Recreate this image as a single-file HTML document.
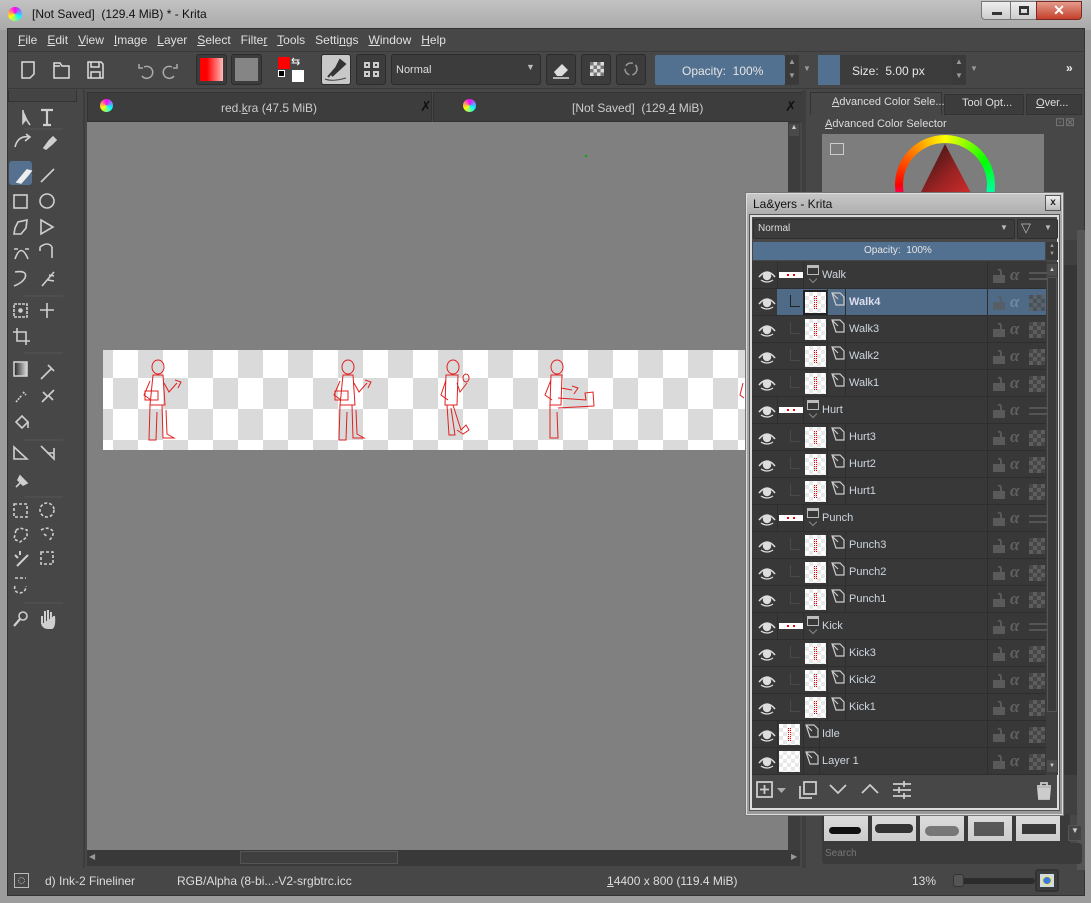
<!DOCTYPE html>
<html><head><meta charset="utf-8">
<style>
*{margin:0;padding:0;box-sizing:border-box}
body{width:1091px;height:903px;overflow:hidden;background:#9c9c9c;font-family:"Liberation Sans",sans-serif;font-size:12px;position:relative}
.a{position:absolute}
.t{position:absolute;white-space:nowrap;color:#d6d6d6}
.btn{position:absolute;background:#3c3c3c;border:1px solid #2c2c2c;border-radius:3px}
.r{position:absolute;left:752px;width:294px;height:27px;border-bottom:1px solid #2e2e2e;background:#383838}
.r.sel{background:#4f6a87}
.r .n{position:absolute;top:7px;color:#cfd6df;font-size:11px}
.r .eye{position:absolute;left:6px;top:6px}
.r .sep{position:absolute;top:0;width:1px;height:27px;background:#2e2e2e}
.r .lk{position:absolute;left:240px;top:6px}
.r .al{position:absolute;left:258px;top:3px;color:#606060;font:italic bold 17px "Liberation Serif",serif}
.r .ck{position:absolute;left:277px;top:6px;width:16px;height:16px;background:conic-gradient(#5e5e5e 25%,#464646 0 50%,#5e5e5e 0 75%,#464646 0);background-size:8px 8px}
.r .gl{position:absolute;left:277px;top:10px;width:18px;height:8px;border-top:2px solid #555;border-bottom:2px solid #555}
.r .th{position:absolute;top:3px;width:21px;height:21px;background:#fff conic-gradient(#e8e8e8 25%,#fff 0 50%,#e8e8e8 0 75%,#fff 0);background-size:8px 8px}
.r .th i{position:absolute;left:9px;top:4px;width:3px;height:13px;border-left:1px dotted #e00;border-right:1px dotted #e00}
.r .gs{position:absolute;left:27px;top:10px;width:24px;height:6px;background:#fff}
.r .gs i{position:absolute;left:8px;top:2px;width:8px;height:2px;border-left:2px solid #e00;border-right:2px solid #e00}
.r .fd{position:absolute;left:55px;top:3px;width:12px;height:10px;border:1px solid #bbb;border-top-width:3px}
.r .cv{position:absolute;left:58px;top:14px;width:6px;height:6px;border-right:1px solid #888;border-bottom:1px solid #888;transform:rotate(45deg)}
.r .ic{position:absolute;top:3px}
.r .ln{position:absolute;left:38px;top:6px;width:10px;height:12px;border-left:1px solid #4a4a4a;border-bottom:1px solid #4a4a4a}
.tool{position:absolute}
</style></head><body>
<svg width="0" height="0" style="position:absolute">
<defs>
<symbol id="eye" viewBox="0 0 18 16"><path d="M1 9 Q9 -1 17 9" fill="none" stroke="#ddd" stroke-width="1.6"/><circle cx="9" cy="8" r="4.2" fill="#ddd"/><path d="M3 12 Q9 16 15 12" fill="none" stroke="#ddd" stroke-width="1.3"/></symbol>
<symbol id="lock" viewBox="0 0 14 16"><rect x="1" y="7" width="12" height="8" fill="#5a5a5a"/><path d="M9 7 V4 Q9 1 6 2" fill="none" stroke="#5a5a5a" stroke-width="2"/></symbol>
<symbol id="pl" viewBox="0 0 14 14"><path d="M1 1 H9 L13 5 V13 H5 Z M1 1 L7 7" fill="none" stroke="#ccc" stroke-width="1.2"/></symbol>
</defs></svg>

<!-- title bar -->
<div class="a" style="left:0;top:0;width:1091px;height:30px;background:linear-gradient(#c2c2c2,#a9a9a9)"></div>
<div class="a" style="left:8px;top:7px;width:14px;height:14px;border-radius:50%;background:conic-gradient(#f0f,#0ff,#ff0,#f0f)"></div>
<div class="t" style="left:32px;top:7px;color:#111;font-size:12px">[Not Saved]&nbsp; (129.4 MiB) * - Krita</div>
<div class="a" style="left:981px;top:1px;width:30px;height:19px;background:linear-gradient(#eee,#ccc);border:1px solid #777;border-radius:0 0 0 4px"><div class="a" style="left:10px;top:10px;width:10px;height:3px;background:#333"></div></div>
<div class="a" style="left:1010px;top:1px;width:27px;height:19px;background:linear-gradient(#eee,#ccc);border:1px solid #777"><div class="a" style="left:8px;top:4px;width:10px;height:9px;border:2px solid #333;border-top-width:3px"></div></div>
<div class="a" style="left:1036px;top:1px;width:46px;height:19px;background:linear-gradient(#e59c8c,#c4402c);border:1px solid #7a2a22;border-radius:0 0 4px 0;color:#fff;font:bold 14px 'Liberation Sans';text-align:center;line-height:17px">✕</div>

<!-- main area -->
<div class="a" style="left:7px;top:28px;width:1078px;height:868px;background:#474747;border:1px solid #333"></div>
<!-- menu -->
<div class="t" style="left:18px;top:33px;font-size:12px;color:#e0e0e0;word-spacing:0"><u>F</u>ile&nbsp;&nbsp; <u>E</u>dit&nbsp;&nbsp; <u>V</u>iew&nbsp;&nbsp; <u>I</u>mage&nbsp;&nbsp; <u>L</u>ayer&nbsp;&nbsp; <u>S</u>elect&nbsp;&nbsp; Filte<u>r</u>&nbsp;&nbsp; <u>T</u>ools&nbsp;&nbsp; Setti<u>n</u>gs&nbsp;&nbsp; <u>W</u>indow&nbsp;&nbsp; <u>H</u>elp</div>
<div class="a" style="left:8px;top:51px;width:1077px;height:1px;background:#3a3a3a"></div>
<!-- toolbar -->
<svg class="a" style="left:14px;top:56px" width="300" height="30">
<g fill="none" stroke="#ddd" stroke-width="1.5">
<path d="M8 6 H20 V18 L16 22 H8 Z"/>
<path d="M40 7 H46 L48 10 H55 V22 H40 Z M40 10 H46"/>
<path d="M74 6 H87 L89 8 V22 H74 Z M77 6 V11 H85 V6 M77 22 V16 H86 V22"/>
<path d="M130 11 A6 6 0 1 1 128 20 M125 8 V12 H129" stroke="#aaa"/>
<path d="M158 11 A6 6 0 1 0 160 20 M163 8 V12 H159" stroke="#aaa"/>
</g></svg>
<div class="btn" style="left:196px;top:54px;width:31px;height:31px;padding:3px"><div style="width:100%;height:100%;background:linear-gradient(90deg,#f00 30%,#fbb)"></div></div>
<div class="btn" style="left:231px;top:54px;width:31px;height:31px;padding:3px"><div style="width:100%;height:100%;background:#858585"></div></div>
<div class="a" style="left:278px;top:57px;width:12px;height:12px;background:#f00"></div>
<div class="a" style="left:278px;top:70px;width:7px;height:7px;background:#000;border:1px solid #fff"></div>
<div class="a" style="left:292px;top:70px;width:12px;height:12px;background:#fff"></div>
<div class="t" style="left:291px;top:55px;font-size:11px;color:#fff">⇆</div>
<div class="btn" style="left:321px;top:54px;width:30px;height:31px;background:#c8c8c8"><svg width="28" height="29"><path d="M6 22 L20 6 M18 5 L23 9 L10 21 Z" stroke="#333" stroke-width="2" fill="#333"/><path d="M3 24 Q10 27 24 23" stroke="#444" fill="none"/></svg></div>
<div class="btn" style="left:356px;top:54px;width:30px;height:31px"><div class="a" style="left:7px;top:7px;width:6px;height:6px;border:2px solid #ccc"></div><div class="a" style="left:16px;top:7px;width:6px;height:6px;border:2px solid #ccc"></div><div class="a" style="left:7px;top:16px;width:6px;height:6px;border:2px solid #ccc"></div><div class="a" style="left:16px;top:16px;width:6px;height:6px;border:2px solid #ccc"></div></div>
<div class="btn" style="left:391px;top:54px;width:150px;height:31px"><span class="t" style="left:4px;top:9px;font-size:11px;color:#ddd">Normal</span><span class="t" style="left:134px;top:7px;font-size:9px;color:#bbb">▼</span></div>
<div class="btn" style="left:546px;top:54px;width:30px;height:31px"><svg width="28" height="29"><path d="M7 17 L15 9 L21 15 L15 21 H10 Z" fill="#ddd"/><path d="M6 23 H22" stroke="#ddd" stroke-width="1.5"/></svg></div>
<div class="btn" style="left:581px;top:54px;width:30px;height:31px;padding:7px 8px"><div style="width:14px;height:14px;background:conic-gradient(#ddd 25%,#777 0 50%,#ddd 0 75%,#777 0);background-size:7px 7px"></div></div>
<div class="btn" style="left:616px;top:54px;width:30px;height:31px"><svg width="28" height="29"><circle cx="14" cy="14" r="6" fill="none" stroke="#999" stroke-width="1.5" stroke-dasharray="8 3"/></svg></div>
<div class="a" style="left:655px;top:55px;width:130px;height:30px;background:#52708f;border-radius:2px"></div>
<div class="t" style="left:682px;top:64px;font-size:12px;color:#e6e6e6">Opacity:&nbsp; 100%</div>
<div class="a" style="left:785px;top:55px;width:14px;height:30px;background:#3a3a3a"><span class="t" style="left:3px;top:2px;font-size:8px;color:#999">▲</span><span class="t" style="left:3px;top:16px;font-size:8px;color:#999">▼</span></div>
<span class="t" style="left:803px;top:64px;font-size:8px;color:#999">▼</span>
<div class="a" style="left:818px;top:55px;width:22px;height:30px;background:#52708f"></div>
<div class="a" style="left:840px;top:55px;width:112px;height:30px;background:#3c3c3c"></div>
<div class="t" style="left:852px;top:64px;font-size:12px;color:#e6e6e6">Size:&nbsp; 5.00 px</div>
<div class="a" style="left:952px;top:55px;width:14px;height:30px;background:#3a3a3a"><span class="t" style="left:3px;top:2px;font-size:8px;color:#999">▲</span><span class="t" style="left:3px;top:16px;font-size:8px;color:#999">▼</span></div>
<span class="t" style="left:970px;top:64px;font-size:8px;color:#999">▼</span>
<span class="t" style="left:1066px;top:61px;font-size:12px;color:#eee;font-weight:bold">»</span>
<div class="a" style="left:8px;top:88px;width:1077px;height:1px;background:#3a3a3a"></div>

<!-- toolbox -->
<div class="a" style="left:8px;top:90px;width:69px;height:12px;border:1px solid #333;border-top:0;background:#444"></div>
<div class="a" style="left:83px;top:90px;width:2px;height:778px;background:#3d3d3d"></div>
<div class="a" style="left:9px;top:161px;width:23px;height:24px;background:#55718f;border-radius:3px"></div>
<svg class="a" style="left:8px;top:100px" width="72" height="530">
<g fill="none" stroke="#cfcfcf" stroke-width="1.6">
<path d="M15 10 L15 23 L18 19 L22 25" fill="#cfcfcf"/>
<path d="M33 10 H45 M39 10 V25 M35 25 H43" stroke-width="2.2"/>
<path d="M7 47 Q10 35 22 37 M18 34 L22 37 L17 41"/>
<path d="M36 48 L41 41 L45 37 L48 40 L44 44 L38 49 Z" fill="#cfcfcf"/>
<path d="M16 29 H55" stroke="#555" stroke-width="1"/>
<path d="M9 82 L19 70 L23 71 L20 75 L13 83 Z" fill="#eee" stroke="#eee"/>
<path d="M33 82 L46 69"/>
<rect x="6" y="95" width="13" height="13"/>
<circle cx="39" cy="101" r="7"/>
<path d="M7 128 L10 122 L19 120 L18 128 L13 134 L6 134 Z"/>
<path d="M33 120 L45 127 L33 134 Z M33 120 L33 134"/>
<path d="M7 159 Q13 142 20 159 M6 149 H10 M17 149 H21"/>
<path d="M32 147 Q40 141 44 147 M44 147 V158 M32 147 V151"/>
<path d="M7 172 Q20 170 17 178 Q14 183 6 186"/>
<path d="M34 186 L46 172 M40 180 L46 181 M41 175 L46 176"/>
<path d="M16 196 H55" stroke="#555" stroke-width="1"/>
<rect x="6" y="204" width="13" height="13" stroke-dasharray="3 1"/>
<circle cx="12.5" cy="210.5" r="1.5" fill="#cfcfcf"/>
<path d="M39 203 V218 M32 210 H46"/>
<path d="M9 228 V241 H22 M5 232 H18 V245"/>
<path d="M16 253 H55" stroke="#555" stroke-width="1"/>
<rect x="6" y="262" width="13" height="14" fill="url(#gr)"/>
<path d="M33 279 L44 268 M40 265 L46 271"/>
<path d="M8 302 L14 295 M15 292 L18 295" stroke-dasharray="2 1"/>
<path d="M34 302 L46 290 M35 292 L39 296 M41 296 L45 300"/>
<path d="M8 322 L14 316 L20 322 L14 328 Z M20 322 V328"/>
<path d="M16 340 H55" stroke="#555" stroke-width="1"/>
<path d="M6 359 L6 347 L19 359 Z"/>
<path d="M33 346 L46 359 V348 M39 353 L46 353"/>
<path d="M8 387 L13 382 M12 376 L19 383 L15 385 L10 380 Z" fill="#cfcfcf"/>
<path d="M16 397 H55" stroke="#555" stroke-width="1"/>
<rect x="6" y="404" width="13" height="13" stroke-dasharray="3 2"/>
<circle cx="39" cy="410" r="7" stroke-dasharray="3 2"/>
<path d="M8 430 L12 428 L19 430 L19 437 L12 442 L6 439 Z" stroke-dasharray="3 2"/>
<path d="M33 430 Q40 426 45 431 Q46 437 40 441 M36 434 L40 437" stroke-dasharray="3 2"/>
<path d="M9 466 L20 455 M7 455 L10 458 M12 451 L12 455" stroke-width="2"/>
<rect x="33" y="452" width="12" height="12" stroke-dasharray="3 2"/>
<path d="M7 478 H18 M7 486 Q5 492 12 493 Q18 492 18 486" stroke-dasharray="3 2"/>
<path d="M16 503 H55" stroke="#555" stroke-width="1"/>
<circle cx="15" cy="516" r="4"/><path d="M12 519 L6 526" stroke-width="2.2"/>
<path d="M34 524 V516 M37 524 V511 M40 524 V510 M43 524 V512 M46 524 V516 M34 524 Q36 528 40 528 H44 Q47 526 46 516" fill="#cfcfcf" stroke-width="2"/>
</g>
<defs><linearGradient id="gr"><stop offset="0" stop-color="#222"/><stop offset="1" stop-color="#ddd"/></linearGradient></defs>
</svg>

<!-- document tabs -->
<div class="a" style="left:87px;top:92px;width:345px;height:30px;background:#3d3d3d;border:1px solid #333"></div>
<div class="a" style="left:100px;top:99px;width:13px;height:13px;border-radius:50%;background:conic-gradient(#f0f,#0ff,#ff0,#f0f)"></div>
<div class="t" style="left:221px;top:101px;font-size:12px;color:#ccc">red.<u>k</u>ra (47.5 MiB)</div>
<div class="t" style="left:420px;top:98px;font-size:14px;color:#111">✗</div>
<div class="a" style="left:433px;top:92px;width:370px;height:30px;background:#3d3d3d;border:1px solid #333"></div>
<div class="a" style="left:463px;top:99px;width:13px;height:13px;border-radius:50%;background:conic-gradient(#f0f,#0ff,#ff0,#f0f)"></div>
<div class="t" style="left:572px;top:101px;font-size:12px;color:#ccc">[Not Saved]&nbsp; (129.<u>4</u> MiB)</div>
<div class="t" style="left:785px;top:98px;font-size:14px;color:#111">✗</div>

<!-- canvas -->
<div class="a" style="left:87px;top:122px;width:701px;height:728px;background:#808080"></div>
<div class="a" style="left:585px;top:155px;width:2px;height:2px;background:#0a0"></div>
<div class="a" style="left:103px;top:350px;width:645px;height:100px;background:conic-gradient(#fff 25%,#dadada 0 50%,#fff 0 75%,#dadada 0);background-size:50px 62px;background-position:-15px -3px"></div>
<svg class="a" style="left:103px;top:350px" width="645" height="100">
<g fill="none" stroke="#e02020" stroke-width="1">
<g id="f1"><ellipse cx="55" cy="17" rx="6" ry="7"/><path d="M50 25 H60 L62 55 H47 Z M47 31 L41 45 L48 50 M61 33 L66 42 L74 33 M47 55 L46 90 H53 L54 62 M59 55 L60 88 H71 L64 84 L63 60"/><path d="M42 41 H55 V50 H42 Z M72 30 L78 32 L75 38"/></g>
<use href="#f1" x="190"/>
<g transform="translate(290,0)"><ellipse cx="60" cy="17" rx="6" ry="7"/><path d="M53 25 H65 L64 55 H52 Z M53 30 L48 45 L55 50 M64 33 L67 42 L74 33 M54 55 L56 85 L62 85 L58 58 M60 55 L68 80 L73 75 L76 80 L70 84 L64 80"/><ellipse cx="73" cy="28" rx="3" ry="4"/></g>
<g transform="translate(385,0)"><ellipse cx="69" cy="17" rx="6" ry="7"/><path d="M63 25 H74 L73 55 H62 Z M63 30 L57 45 L64 50 M73 38 L84 40 M84 36 L90 38 L86 44 M62 55 L62 88 H70 L69 62 M70 48 L98 50 L97 43 L105 42 L106 56 L70 58"/></g>
<path d="M640 33 L637 45 L641 48"/>
</g></svg>
<div class="a" style="left:788px;top:122px;width:12px;height:728px;background:#3d3d3d"><div class="a" style="left:1px;top:2px;width:10px;height:12px;background:#4a4a4a;color:#ccc;font-size:7px;text-align:center">▲</div></div>
<div class="a" style="left:87px;top:850px;width:713px;height:16px;background:#393939"><span class="t" style="left:2px;top:2px;font-size:8px;color:#999">◀</span><div class="a" style="left:153px;top:1px;width:158px;height:13px;border:1px solid #555;background:#3f3f3f"></div><span class="t" style="left:704px;top:2px;font-size:8px;color:#999">▶</span></div>
<!-- status bar -->
<div class="a" style="left:14px;top:873px;width:15px;height:15px;border:1px solid #bbb"><div class="a" style="left:3px;top:3px;width:7px;height:7px;border:1px dotted #bbb;border-radius:50%"></div></div>
<div class="t" style="left:45px;top:874px;font-size:12px;color:#ddd">d) Ink-2 Fineliner</div>
<div class="t" style="left:177px;top:874px;font-size:12px;color:#ddd">RGB/Alpha (8-bi...-V2-srgbtrc.icc</div>
<div class="t" style="left:607px;top:874px;font-size:12px;color:#ddd"><u>1</u>4400 x 800 (119.4 MiB)</div>
<div class="t" style="left:912px;top:874px;font-size:12px;color:#ddd">13%</div>
<div class="a" style="left:953px;top:878px;width:82px;height:6px;background:#2c2c2c;border-radius:3px"></div>
<div class="a" style="left:953px;top:874px;width:11px;height:13px;background:#555;border:1px solid #333;border-radius:3px"></div>
<div class="a" style="left:1035px;top:869px;width:24px;height:23px;border:2px solid #333;border-radius:3px;background:#3c3c3c;padding:3px"><div style="width:100%;height:100%;background:radial-gradient(#3a7ad9 35%,#f3e07a 40%,#cde 70%)"></div></div>

<!-- right dock -->
<div class="a" style="left:802px;top:90px;width:4px;height:778px;background:#3e3e3e"></div>
<div class="a" style="left:810px;top:92px;width:132px;height:23px;background:#474747;border:1px solid #333;border-bottom:0"></div>
<div class="t" style="left:832px;top:96px;font-size:11px;color:#ddd"><u>A</u>dvanced Color Sele...</div>
<div class="a" style="left:944px;top:94px;width:80px;height:21px;background:#3c3c3c;border:1px solid #333"></div>
<div class="t" style="left:962px;top:97px;font-size:11px;color:#ddd">Tool Opt...</div>
<div class="a" style="left:1026px;top:94px;width:56px;height:21px;background:#3c3c3c;border:1px solid #333"></div>
<div class="t" style="left:1036px;top:97px;font-size:11px;color:#ddd"><u>O</u>ver...</div>
<div class="t" style="left:825px;top:118px;font-size:11px;color:#ddd"><u>A</u>dvanced Color Selector</div>
<div class="t" style="left:1055px;top:115px;font-size:12px;color:#777">⊡⊠</div>
<div class="a" style="left:822px;top:134px;width:222px;height:106px;background:#7d7d7d"></div>
<div class="a" style="left:830px;top:143px;width:14px;height:12px;border:1px solid #ccc"></div>
<div class="a" style="left:895px;top:135px;width:100px;height:100px;border-radius:50%;background:conic-gradient(#ff0 0deg,#0f0 60deg,#0ff 120deg,#00f 180deg,#f0f 240deg,#f00 270deg,#f80 320deg,#ff0 360deg)"></div>
<div class="a" style="left:903px;top:143px;width:84px;height:84px;border-radius:50%;background:#7d7d7d"></div>
<svg class="a" style="left:900px;top:140px" width="90" height="80"><defs><linearGradient id="tg" x1="0" y1="0" x2="1" y2="1"><stop offset="0" stop-color="#111"/><stop offset=".5" stop-color="#922"/><stop offset="1" stop-color="#e33"/></linearGradient></defs><polygon points="45,4 80,70 12,70" fill="url(#tg)"/></svg>
<div class="a" style="left:1063px;top:240px;width:22px;height:575px;background:#404040"></div>
<div class="a" style="left:1063px;top:265px;width:14px;height:510px;background:#363636"></div>
<div class="a" style="left:1077px;top:230px;width:8px;height:640px;background:#555"></div>
<!-- brush presets -->
<div class="a" style="left:822px;top:814px;width:248px;height:30px;background:#3a3a3a"></div>
<div class="a" style="left:824px;top:814px;width:44px;height:27px;background:linear-gradient(#ddd,#ccc)"><div class="a" style="left:5px;top:13px;width:32px;height:7px;background:#111;border-radius:4px"></div></div>
<div class="a" style="left:872px;top:814px;width:44px;height:27px;background:linear-gradient(#ddd,#ccc)"><div class="a" style="left:3px;top:10px;width:38px;height:9px;background:#333;border-radius:4px"></div></div>
<div class="a" style="left:920px;top:814px;width:44px;height:27px;background:linear-gradient(#ddd,#ccc)"><div class="a" style="left:5px;top:12px;width:34px;height:10px;background:#777;border-radius:5px"></div></div>
<div class="a" style="left:968px;top:814px;width:44px;height:27px;background:linear-gradient(#ddd,#ccc)"><div class="a" style="left:6px;top:8px;width:30px;height:14px;background:#222;opacity:.7"></div></div>
<div class="a" style="left:1016px;top:814px;width:44px;height:27px;background:linear-gradient(#ddd,#ccc)"><div class="a" style="left:6px;top:10px;width:34px;height:10px;background:#111;opacity:.8"></div></div>
<div class="a" style="left:1068px;top:825px;width:14px;height:16px;background:#444;border:1px solid #555;color:#ccc;font-size:8px;text-align:center">▼</div>
<div class="a" style="left:822px;top:843px;width:260px;height:21px;background:#3b3b3b;border-radius:3px"></div>
<div class="t" style="left:825px;top:848px;font-size:10px;color:#777">Search</div>

<!-- Layers floating window -->
<div class="a" style="left:745px;top:192px;width:319px;height:624px;background:linear-gradient(#c8c8c8,#a9a9a9 25px,#9a9a9a);border:1px solid #777;box-shadow:0 0 0 1px #ddd inset"></div>
<div class="t" style="left:753px;top:197px;font-size:12px;color:#111">La&amp;yers - Krita</div>
<div class="a" style="left:1045px;top:195px;width:16px;height:16px;border:1px solid #555;background:linear-gradient(#eee,#bbb);font-size:10px;text-align:center;line-height:14px;font-weight:bold;color:#222">x</div>
<div class="a" style="left:750px;top:215px;width:309px;height:595px;background:#474747;border:2px solid #ddd;outline:1px solid #555"></div>
<div class="a" style="left:753px;top:219px;width:262px;height:20px;background:#3c3c3c;border:1px solid #2e2e2e;border-radius:2px"></div>
<div class="t" style="left:758px;top:223px;font-size:10px;color:#ddd">Normal</div>
<span class="t" style="left:1000px;top:223px;font-size:8px;color:#bbb">▼</span>
<div class="a" style="left:1017px;top:219px;width:41px;height:20px;background:#3c3c3c;border:1px solid #2e2e2e;border-radius:2px"></div>
<span class="t" style="left:1021px;top:220px;font-size:13px;color:#bbb">▽</span><span class="t" style="left:1044px;top:223px;font-size:8px;color:#bbb">▼</span>
<div class="a" style="left:753px;top:242px;width:292px;height:18px;background:#52708f"></div>
<div class="t" style="left:864px;top:245px;font-size:10px;color:#e6e6e6">Opacity:&nbsp; 100%</div>
<div class="a" style="left:1046px;top:242px;width:12px;height:18px;background:#3a3a3a;color:#999;font-size:6px;line-height:8px;text-align:center">▲<br>▼</div>
<div class="a" style="left:752px;top:261px;width:294px;height:514px;background:#383838"></div>
<div class="a" style="left:1046px;top:262px;width:12px;height:513px;background:#3e3e3e"><div class="a" style="left:1px;top:2px;width:10px;height:12px;background:#4c4c4c;color:#ccc;font-size:6px;text-align:center;line-height:12px">▲</div><div class="a" style="left:1px;top:15px;width:10px;height:435px;border:1px solid #555;background:#3a3a3a"></div><div class="a" style="left:1px;top:498px;width:10px;height:12px;background:#4c4c4c;color:#ccc;font-size:6px;text-align:center;line-height:12px">▼</div></div>

<!-- rows -->
<div class="r" style="top:262px"><svg class="eye" width="18" height="16"><use href="#eye"/></svg><div class="sep" style="left:25px"></div><div class="gs"><i></i></div><div class="sep" style="left:51px"></div><div class="fd"></div><div class="cv"></div><span class="n" style="left:70px">Walk</span><div class="sep" style="left:235px"></div><svg class="lk" width="14" height="16"><use href="#lock"/></svg><span class="al">α</span><div class="gl"></div></div>
<div class="r sel" style="top:289px;background:linear-gradient(90deg,#383838 25px,#4f6a87 25px)"><svg class="eye" width="18" height="16"><use href="#eye"/></svg><div class="ln" style="border-color:#222"></div><div class="th" style="left:53px;outline:2px solid #222"><i></i></div><div class="sep" style="left:75px"></div><svg class="ic" style="left:79px" width="14" height="14"><use href="#pl"/></svg><div class="sep" style="left:93px"></div><span class="n" style="left:97px;font-weight:bold;color:#dde">Walk4</span><div class="sep" style="left:235px"></div><svg class="lk" width="14" height="16" style="opacity:.7"><use href="#lock"/></svg><span class="al" style="color:#7288a0">α</span><div class="ck" style="opacity:.7"></div></div>
<div class="r" style="top:316px"><svg class="eye" width="18" height="16"><use href="#eye"/></svg><div class="ln"></div><div class="th" style="left:53px"><i></i></div><div class="sep" style="left:75px"></div><svg class="ic" style="left:79px" width="14" height="14"><use href="#pl"/></svg><div class="sep" style="left:93px"></div><span class="n" style="left:97px">Walk3</span><div class="sep" style="left:235px"></div><svg class="lk" width="14" height="16"><use href="#lock"/></svg><span class="al">α</span><div class="ck"></div></div>
<div class="r" style="top:343px"><svg class="eye" width="18" height="16"><use href="#eye"/></svg><div class="ln"></div><div class="th" style="left:53px"><i></i></div><div class="sep" style="left:75px"></div><svg class="ic" style="left:79px" width="14" height="14"><use href="#pl"/></svg><div class="sep" style="left:93px"></div><span class="n" style="left:97px">Walk2</span><div class="sep" style="left:235px"></div><svg class="lk" width="14" height="16"><use href="#lock"/></svg><span class="al">α</span><div class="ck"></div></div>
<div class="r" style="top:370px"><svg class="eye" width="18" height="16"><use href="#eye"/></svg><div class="ln"></div><div class="th" style="left:53px"><i></i></div><div class="sep" style="left:75px"></div><svg class="ic" style="left:79px" width="14" height="14"><use href="#pl"/></svg><div class="sep" style="left:93px"></div><span class="n" style="left:97px">Walk1</span><div class="sep" style="left:235px"></div><svg class="lk" width="14" height="16"><use href="#lock"/></svg><span class="al">α</span><div class="ck"></div></div>
<div class="r" style="top:397px"><svg class="eye" width="18" height="16"><use href="#eye"/></svg><div class="sep" style="left:25px"></div><div class="gs"><i></i></div><div class="sep" style="left:51px"></div><div class="fd"></div><div class="cv"></div><span class="n" style="left:70px">Hurt</span><div class="sep" style="left:235px"></div><svg class="lk" width="14" height="16"><use href="#lock"/></svg><span class="al">α</span><div class="gl"></div></div>
<div class="r" style="top:424px"><svg class="eye" width="18" height="16"><use href="#eye"/></svg><div class="ln"></div><div class="th" style="left:53px"><i></i></div><div class="sep" style="left:75px"></div><svg class="ic" style="left:79px" width="14" height="14"><use href="#pl"/></svg><div class="sep" style="left:93px"></div><span class="n" style="left:97px">Hurt3</span><div class="sep" style="left:235px"></div><svg class="lk" width="14" height="16"><use href="#lock"/></svg><span class="al">α</span><div class="ck"></div></div>
<div class="r" style="top:451px"><svg class="eye" width="18" height="16"><use href="#eye"/></svg><div class="ln"></div><div class="th" style="left:53px"><i></i></div><div class="sep" style="left:75px"></div><svg class="ic" style="left:79px" width="14" height="14"><use href="#pl"/></svg><div class="sep" style="left:93px"></div><span class="n" style="left:97px">Hurt2</span><div class="sep" style="left:235px"></div><svg class="lk" width="14" height="16"><use href="#lock"/></svg><span class="al">α</span><div class="ck"></div></div>
<div class="r" style="top:478px"><svg class="eye" width="18" height="16"><use href="#eye"/></svg><div class="ln"></div><div class="th" style="left:53px"><i></i></div><div class="sep" style="left:75px"></div><svg class="ic" style="left:79px" width="14" height="14"><use href="#pl"/></svg><div class="sep" style="left:93px"></div><span class="n" style="left:97px">Hurt1</span><div class="sep" style="left:235px"></div><svg class="lk" width="14" height="16"><use href="#lock"/></svg><span class="al">α</span><div class="ck"></div></div>
<div class="r" style="top:505px"><svg class="eye" width="18" height="16"><use href="#eye"/></svg><div class="sep" style="left:25px"></div><div class="gs"><i></i></div><div class="sep" style="left:51px"></div><div class="fd"></div><div class="cv"></div><span class="n" style="left:70px">Punch</span><div class="sep" style="left:235px"></div><svg class="lk" width="14" height="16"><use href="#lock"/></svg><span class="al">α</span><div class="gl"></div></div>
<div class="r" style="top:532px"><svg class="eye" width="18" height="16"><use href="#eye"/></svg><div class="ln"></div><div class="th" style="left:53px"><i></i></div><div class="sep" style="left:75px"></div><svg class="ic" style="left:79px" width="14" height="14"><use href="#pl"/></svg><div class="sep" style="left:93px"></div><span class="n" style="left:97px">Punch3</span><div class="sep" style="left:235px"></div><svg class="lk" width="14" height="16"><use href="#lock"/></svg><span class="al">α</span><div class="ck"></div></div>
<div class="r" style="top:559px"><svg class="eye" width="18" height="16"><use href="#eye"/></svg><div class="ln"></div><div class="th" style="left:53px"><i></i></div><div class="sep" style="left:75px"></div><svg class="ic" style="left:79px" width="14" height="14"><use href="#pl"/></svg><div class="sep" style="left:93px"></div><span class="n" style="left:97px">Punch2</span><div class="sep" style="left:235px"></div><svg class="lk" width="14" height="16"><use href="#lock"/></svg><span class="al">α</span><div class="ck"></div></div>
<div class="r" style="top:586px"><svg class="eye" width="18" height="16"><use href="#eye"/></svg><div class="ln"></div><div class="th" style="left:53px"><i></i></div><div class="sep" style="left:75px"></div><svg class="ic" style="left:79px" width="14" height="14"><use href="#pl"/></svg><div class="sep" style="left:93px"></div><span class="n" style="left:97px">Punch1</span><div class="sep" style="left:235px"></div><svg class="lk" width="14" height="16"><use href="#lock"/></svg><span class="al">α</span><div class="ck"></div></div>
<div class="r" style="top:613px"><svg class="eye" width="18" height="16"><use href="#eye"/></svg><div class="sep" style="left:25px"></div><div class="gs"><i></i></div><div class="sep" style="left:51px"></div><div class="fd"></div><div class="cv"></div><span class="n" style="left:70px">Kick</span><div class="sep" style="left:235px"></div><svg class="lk" width="14" height="16"><use href="#lock"/></svg><span class="al">α</span><div class="gl"></div></div>
<div class="r" style="top:640px"><svg class="eye" width="18" height="16"><use href="#eye"/></svg><div class="ln"></div><div class="th" style="left:53px"><i></i></div><div class="sep" style="left:75px"></div><svg class="ic" style="left:79px" width="14" height="14"><use href="#pl"/></svg><div class="sep" style="left:93px"></div><span class="n" style="left:97px">Kick3</span><div class="sep" style="left:235px"></div><svg class="lk" width="14" height="16"><use href="#lock"/></svg><span class="al">α</span><div class="ck"></div></div>
<div class="r" style="top:667px"><svg class="eye" width="18" height="16"><use href="#eye"/></svg><div class="ln"></div><div class="th" style="left:53px"><i></i></div><div class="sep" style="left:75px"></div><svg class="ic" style="left:79px" width="14" height="14"><use href="#pl"/></svg><div class="sep" style="left:93px"></div><span class="n" style="left:97px">Kick2</span><div class="sep" style="left:235px"></div><svg class="lk" width="14" height="16"><use href="#lock"/></svg><span class="al">α</span><div class="ck"></div></div>
<div class="r" style="top:694px"><svg class="eye" width="18" height="16"><use href="#eye"/></svg><div class="ln"></div><div class="th" style="left:53px"><i></i></div><div class="sep" style="left:75px"></div><svg class="ic" style="left:79px" width="14" height="14"><use href="#pl"/></svg><div class="sep" style="left:93px"></div><span class="n" style="left:97px">Kick1</span><div class="sep" style="left:235px"></div><svg class="lk" width="14" height="16"><use href="#lock"/></svg><span class="al">α</span><div class="ck"></div></div>
<div class="r" style="top:721px"><svg class="eye" width="18" height="16"><use href="#eye"/></svg><div class="sep" style="left:25px"></div><div class="th" style="left:27px"><i></i></div><div class="sep" style="left:51px"></div><svg class="ic" style="left:53px" width="14" height="14"><use href="#pl"/></svg><div class="sep" style="left:67px"></div><span class="n" style="left:70px">Idle</span><div class="sep" style="left:235px"></div><svg class="lk" width="14" height="16"><use href="#lock"/></svg><span class="al">α</span><div class="ck"></div></div>
<div class="r" style="top:748px"><svg class="eye" width="18" height="16"><use href="#eye"/></svg><div class="sep" style="left:25px"></div><div class="th" style="left:27px"></div><div class="sep" style="left:51px"></div><svg class="ic" style="left:53px" width="14" height="14"><use href="#pl"/></svg><div class="sep" style="left:67px"></div><span class="n" style="left:70px">Layer 1</span><div class="sep" style="left:235px"></div><svg class="lk" width="14" height="16"><use href="#lock"/></svg><span class="al">α</span><div class="ck"></div></div>

<!-- layer bottom toolbar -->
<svg class="a" style="left:752px;top:777px" width="305" height="28">
<g fill="none" stroke="#ccc" stroke-width="1.8">
<rect x="5" y="5" width="15" height="15"/><path d="M12.5 8 V17 M8 12.5 H17"/>
<path d="M25 11 H34 L29.5 16 Z" fill="#aaa" stroke="none"/>
<rect x="52" y="5" width="12" height="12"/><path d="M48 9 V21 H60"/>
<path d="M78 8 L86 16 L94 8"/>
<path d="M110 16 L118 8 L126 16"/>
<path d="M141 7 H159 M141 13 H159 M141 19 H159 M152 4 V10 M147 10 V16 M152 16 V22"/>
<path d="M285 9 H299 M289 9 V6 H295 V9" /><path d="M286 11 H298 L297 22 H287 Z" fill="#ccc"/>
</g></svg>
</body></html>
